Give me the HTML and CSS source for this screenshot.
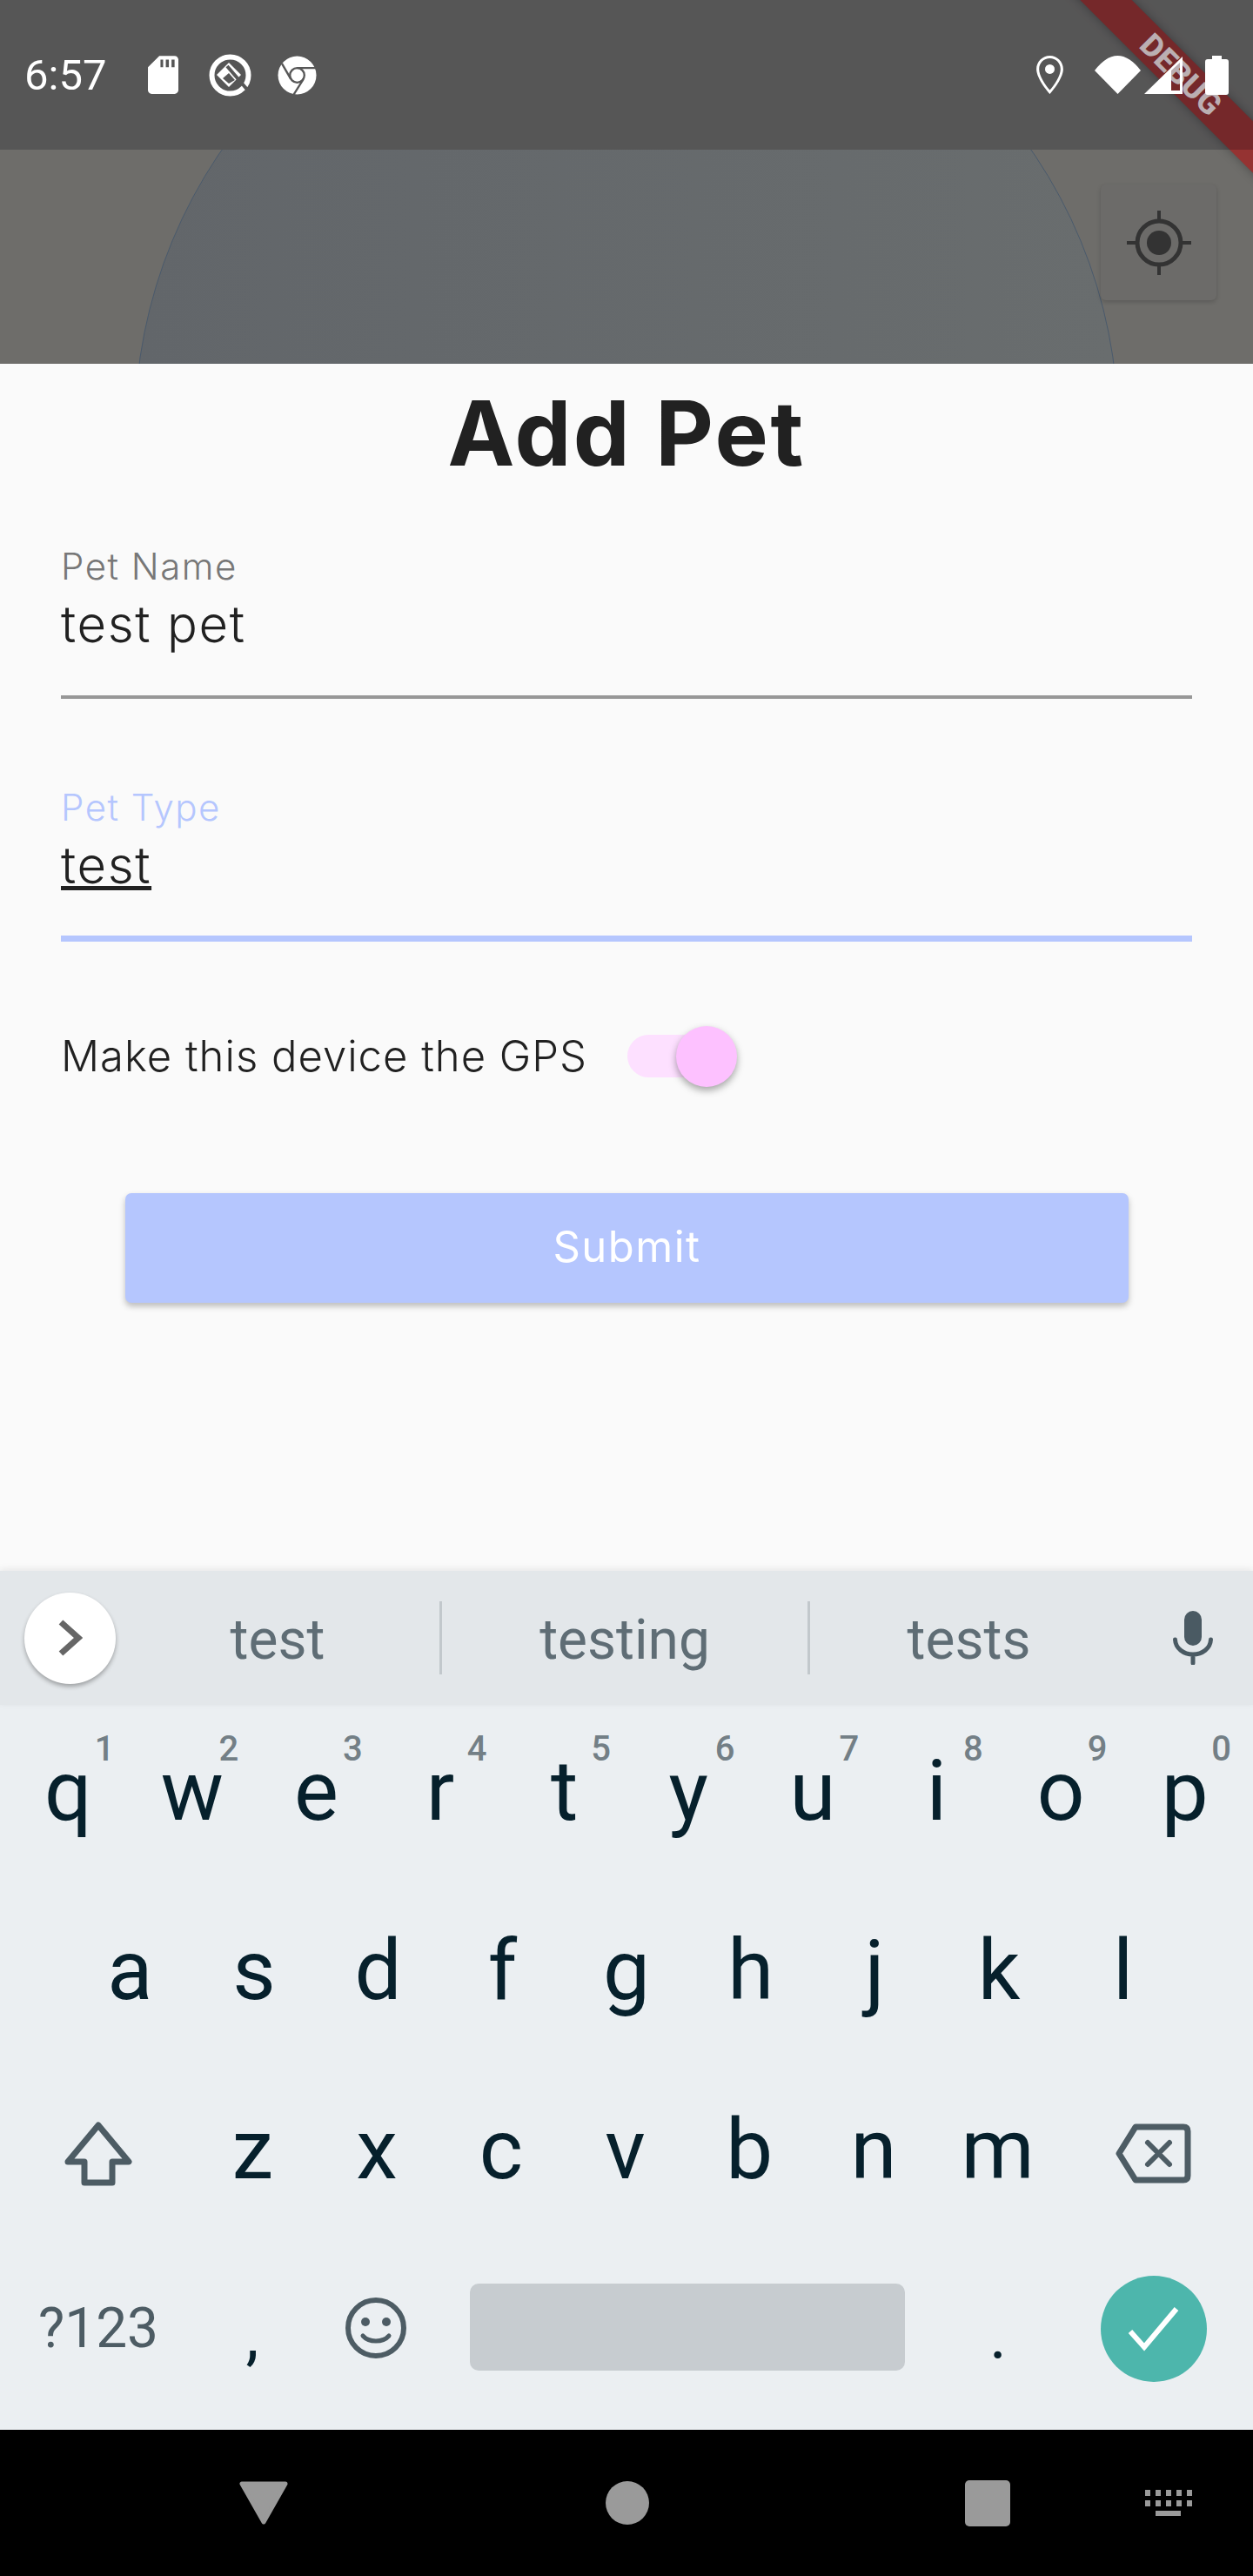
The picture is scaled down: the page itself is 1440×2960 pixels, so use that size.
FILE: index.html
```html
<!DOCTYPE html>
<html>
<head>
    <title>Add Pet</title>
    <link rel="stylesheet" href="styles.css">
</head>
<body>
<div class="phone">
    <div class="top">
        <div class="status-bar">
            <div class="status-left">
                <span class="time">6:57</span>
                <svg class="ic-sd" viewBox="4 2 16 20" width="35" height="44"><path fill="#fff" d="M18 2h-8L4.02 8 4 20c0 1.1.9 2 2 2h12c1.1 0 2-.9 2-2V4c0-1.1-.9-2-2-2zm-6 6h-1.4V4H12v4zm3 0h-1.6V4H15v4zm3 0h-1.6V4H18v4z"/></svg>
                <svg class="ic-q" viewBox="0 0 49 49" width="49" height="49">
                    <circle cx="24.5" cy="24.5" r="21" fill="none" stroke="#fff" stroke-width="6"/>
                    <path fill="#fff" d="M23 10 L37 24 L23 38 L9 24Z"/>
                    <path fill="#575757" d="M23 22 L30 30 L23 34 L16 28Z"/>
                    <path stroke="#575757" stroke-width="4" d="M21 14 L45 42"/>
                </svg>
                <svg class="ic-chrome" viewBox="0 0 46 46" width="45" height="45">
                    <circle cx="23" cy="23" r="22.5" fill="#fff"/>
                    <circle cx="23" cy="23" r="8.5" fill="none" stroke="#575757" stroke-width="2.4"/>
                    <path fill="none" stroke="#575757" stroke-width="2.4" d="M23 14.5 H45 M15.6 27.5 L5 9 M30.4 27.5 L19 45.5"/>
                </svg>
            </div>
            <div class="status-right">
                <svg class="ic-pin" viewBox="5 2 14 20" width="31" height="44"><path fill="#fff" d="M12 2C8.13 2 5 5.13 5 9c0 5.25 7 13 7 13s7-7.75 7-13c0-3.87-3.13-7-7-7zM6.4 9c0-3.1 2.5-5.6 5.6-5.6s5.6 2.5 5.6 5.6c0 3.4-3.3 8.4-5.6 11C9.7 17.4 6.4 12.4 6.4 9z"/><circle cx="12" cy="9" r="2.5" fill="#fff"/></svg>
                <svg class="ic-wifi" viewBox="0 0 53 44" width="53" height="44"><path fill="#fff" d="M0 17 Q26.5 -17 53 17 L26.5 44Z"/></svg>
                <svg class="ic-signal" viewBox="0 0 44 43" width="44" height="43"><path fill="#fff" fill-rule="evenodd" d="M0 43 L44 0 V43Z M31 16 V39 H41 V7Z"/></svg>
                <svg class="ic-battery" viewBox="0 0 27 45" width="27" height="45"><path fill="#fff" d="M8 0 H19 V4 H24 Q27 4 27 7 V42 Q27 45 24 45 H3 Q0 45 0 42 V7 Q0 4 3 4 H8Z"/></svg>
            </div>
        </div>
        <div class="map">
            <svg class="map-art" viewBox="0 172 1440 246" width="1440" height="246">
                <defs>
                    <linearGradient id="water" x1="0" x2="1" y1="0" y2="0">
                        <stop offset="0" stop-color="#62666a"/>
                        <stop offset="1" stop-color="#696d6e"/>
                    </linearGradient>
                </defs>
                <circle cx="720" cy="493" r="565" fill="url(#water)" stroke="#4a5a6c" stroke-width="1"/>
            </svg>
            <div class="locate">
                <svg viewBox="0 0 74 74" width="74" height="74">
                    <circle cx="37" cy="37" r="25" fill="none" stroke="#333" stroke-width="5"/>
                    <circle cx="37" cy="37" r="14" fill="#333"/>
                    <path stroke="#333" stroke-width="4" d="M37 0 V12 M37 62 V74 M0 37 H12 M62 37 H74"/>
                </svg>
            </div>
        </div>
        <div class="ribbon">DEBUG</div>
    </div>

    <div class="sheet">
        <h1 class="title">Add Pet</h1>

        <div class="field">
            <div class="label">Pet Name</div>
            <div class="value">test pet</div>
            <div class="line"></div>
        </div>

        <div class="field field-active">
            <div class="label">Pet Type</div>
            <div class="value"><u>test</u></div>
            <div class="line"></div>
        </div>

        <div class="gps-row">
            <span class="gps-label">Make this device the GPS</span>
            <div class="switch"><div class="thumb"></div></div>
        </div>

        <div class="submit">Submit</div>
    </div>

    <div class="suggest-bar">
        <div class="more">
            <svg viewBox="0 0 28 42" width="28" height="42"><path fill="none" stroke="#666" stroke-width="7" d="M3 3 L23 21 L3 39"/></svg>
        </div>
        <div class="word word-1">test</div>
        <div class="divider"></div>
        <div class="word word-2">testing</div>
        <div class="divider"></div>
        <div class="word word-3">tests</div>
        <svg class="mic" viewBox="0 0 46 62" width="46" height="62">
            <rect x="13" y="0" width="20" height="40" rx="10" fill="#4a5a63"/>
            <path fill="none" stroke="#4a5a63" stroke-width="5" stroke-linecap="round" d="M2.5 33 C3 43 12 50 23 50 C34 50 43 43 43.5 33 M23 50 V60"/>
        </svg>
    </div>

    <div class="keyboard">
        <div class="row row-top">
            <div class="key">q<span class="hint">1</span></div>
            <div class="key">w<span class="hint">2</span></div>
            <div class="key">e<span class="hint">3</span></div>
            <div class="key">r<span class="hint">4</span></div>
            <div class="key">t<span class="hint">5</span></div>
            <div class="key">y<span class="hint">6</span></div>
            <div class="key">u<span class="hint">7</span></div>
            <div class="key">i<span class="hint">8</span></div>
            <div class="key">o<span class="hint">9</span></div>
            <div class="key">p<span class="hint">0</span></div>
        </div>
        <div class="row row-mid">
            <div class="key">a</div>
            <div class="key">s</div>
            <div class="key">d</div>
            <div class="key">f</div>
            <div class="key">g</div>
            <div class="key">h</div>
            <div class="key">j</div>
            <div class="key">k</div>
            <div class="key">l</div>
        </div>
        <div class="row row-low">
            <div class="key key-icon">
                <svg viewBox="0 0 78 75" width="78" height="75"><path fill="none" stroke="#4d5c64" stroke-width="7" stroke-linejoin="round" d="M39 5 L74 47 H55 V71 H23 V47 H4Z"/></svg>
            </div>
            <div class="key">z</div>
            <div class="key">x</div>
            <div class="key">c</div>
            <div class="key">v</div>
            <div class="key">b</div>
            <div class="key">n</div>
            <div class="key">m</div>
            <div class="key key-icon">
                <svg viewBox="0 0 87 69" width="87" height="69">
                    <path fill="none" stroke="#4d5c64" stroke-width="7" stroke-linejoin="round" d="M23 4 H78 Q83 4 83 9 V60 Q83 65 78 65 H23 L4 34.5Z"/>
                    <path fill="none" stroke="#4d5c64" stroke-width="6" stroke-linecap="round" d="M37 22 L62 47 M62 22 L37 47"/>
                </svg>
            </div>
        </div>
        <div class="row row-bottom">
            <div class="key key-symbols">?123</div>
            <div class="key key-punct">,</div>
            <div class="key key-icon">
                <svg class="smiley" viewBox="0 0 70 70" width="70" height="70">
                    <circle cx="35" cy="35" r="32" fill="none" stroke="#4d5c64" stroke-width="6"/>
                    <circle cx="23" cy="28" r="5" fill="#4d5c64"/>
                    <circle cx="47" cy="28" r="5" fill="#4d5c64"/>
                    <path fill="none" stroke="#4d5c64" stroke-width="5" stroke-linecap="round" d="M20 44 C27 52 43 52 50 44"/>
                </svg>
            </div>
            <div class="key key-icon"><div class="space"></div></div>
            <div class="key key-punct">.</div>
            <div class="key key-icon">
                <div class="enter">
                    <svg viewBox="0 0 60 52" width="60" height="52"><path fill="none" stroke="#fff" stroke-width="6" d="M3 29 L19 47 L56 3"/></svg>
                </div>
            </div>
        </div>
    </div>

    <div class="nav-bar">
        <svg class="nav-back" viewBox="0 0 56 50" width="56" height="50"><path fill="#9a9a9a" stroke="#9a9a9a" stroke-width="5" stroke-linejoin="round" d="M3 3 H53 L28 47Z"/></svg>
        <div class="nav-home"></div>
        <div class="nav-recent"></div>
        <svg class="nav-kbd" viewBox="0 0 54 30" width="54" height="30">
            <g fill="#9a9a9a">
                <rect x="0" y="0" width="6" height="7"/><rect x="12" y="0" width="6" height="7"/><rect x="24" y="0" width="6" height="7"/><rect x="36" y="0" width="6" height="7"/><rect x="48" y="0" width="6" height="7"/>
                <rect x="0" y="12" width="6" height="7"/><rect x="12" y="12" width="6" height="7"/><rect x="24" y="12" width="6" height="7"/><rect x="36" y="12" width="6" height="7"/><rect x="48" y="12" width="6" height="7"/>
                <rect x="12" y="24" width="29" height="6"/>
            </g>
        </svg>
    </div>
</div>
</body>
</html>
```

FILE: styles.css
```css
body {
    margin: 0;
    background: #fafafa;
    font-family: Roboto, sans-serif;
}
.phone {
    position: relative;
    width: 1440px;
    height: 2960px;
    overflow: hidden;
    display: flex;
    flex-direction: column;
}

/* status bar + map */
.top {
    position: relative;
    height: 418px;
    background: #6e6d6a;
}
.status-bar {
    position: relative;
    z-index: 2;
    height: 172px;
    box-sizing: border-box;
    padding: 0 28px;
    background: rgba(0, 1, 15, 0.21);
    display: flex;
    justify-content: space-between;
    align-items: center;
    color: #fff;
}
.status-left,
.status-right {
    display: flex;
    align-items: center;
}
.time {
    width: 142px;
    font-size: 49px;
}
.ic-q { margin-left: 35px; }
.ic-chrome { margin-left: 30px; }
.ic-wifi { margin-left: 36px; }
.ic-signal { margin-left: 4px; }
.ic-battery { margin-left: 26px; }
.map {
    height: 246px;
}
.map-art {
    display: block;
}
.locate {
    position: absolute;
    left: 1265px;
    top: 212px;
    width: 133px;
    height: 133px;
    background: #6c6b69;
    border-radius: 6px;
    box-shadow: 0 2px 5px rgba(0, 0, 0, 0.18);
    display: flex;
    align-items: center;
    justify-content: center;
}
.ribbon {
    position: absolute;
    z-index: 1;
    left: 1154px;
    top: 62px;
    width: 400px;
    height: 42px;
    box-sizing: border-box;
    padding-left: 8px;
    transform: rotate(45deg);
    background: rgba(170, 20, 20, 0.65);
    box-shadow: 0 0 12px rgba(0, 0, 0, 0.3);
    color: rgba(255, 255, 255, 0.85);
    font-size: 36px;
    font-weight: 800;
    line-height: 42px;
    text-align: center;
}

/* form sheet */
.sheet {
    height: 1387px;
    box-sizing: border-box;
    padding: 0 70px;
    background: #fafafa;
    font-family: Inter, sans-serif;
    color: #212121;
}
.title {
    margin: 0;
    height: 160px;
    font-size: 103px;
    font-weight: 700;
    letter-spacing: 2.5px;
    line-height: 160px;
    text-align: center;
}
.field {
    margin-top: 43px;
}
.field-active {
    margin-top: 95px;
}
.label {
    height: 60px;
    font-size: 42px;
    font-weight: 300;
    letter-spacing: 1.5px;
    line-height: 60px;
    color: #777;
}
.value {
    margin-top: 1px;
    height: 70px;
    font-size: 58px;
    font-weight: 300;
    letter-spacing: 1.6px;
    line-height: 70px;
}
.line {
    margin-top: 47px;
    height: 4px;
    background: #979797;
}
.field-active .label { color: #b5c6fe; }
.field-active .line {
    margin-top: 46px;
    height: 7px;
    background: #b5c6fe;
}
.gps-row {
    margin-top: 81px;
    height: 100px;
    display: flex;
    align-items: center;
}
.gps-label {
    width: 651px;
    font-size: 49px;
    font-weight: 300;
    letter-spacing: 1px;
}
.switch {
    position: relative;
    width: 119px;
    height: 49px;
    border-radius: 25px;
    background: #fde0ff;
}
.thumb {
    position: absolute;
    left: 56px;
    top: -10px;
    width: 70px;
    height: 70px;
    border-radius: 50%;
    background: #fdc1ff;
    box-shadow: 0 4px 9px rgba(0, 0, 0, 0.35);
}
.submit {
    margin: 108px 0 0 74px;
    width: 1153px;
    height: 126px;
    border-radius: 7px;
    background: #b5c6fe;
    box-shadow: 0 4px 7px rgba(0, 0, 0, 0.25);
    color: #fff;
    font-size: 49px;
    font-weight: 400;
    letter-spacing: 1.5px;
    line-height: 124px;
    text-align: center;
}

/* keyboard suggestions */
.suggest-bar {
    position: relative;
    height: 154px;
    box-sizing: border-box;
    padding-left: 28px;
    background: #e3e7ea;
    box-shadow: 0 -2px 8px rgba(0, 0, 0, 0.08);
    display: flex;
    align-items: center;
}
.more {
    width: 105px;
    height: 105px;
    border-radius: 50%;
    background: #fff;
    box-shadow: 0 3px 5px rgba(0, 0, 0, 0.3);
    display: flex;
    align-items: center;
    justify-content: center;
}
.word {
    padding-top: 4px;
    font-size: 64px;
    color: #5f6d75;
    text-align: center;
}
.word-1 { width: 372px; }
.word-2 { width: 420px; }
.word-3 { width: 365px; }
.divider {
    width: 3px;
    height: 84px;
    background: #c2c8cc;
}
.mic {
    margin-left: 52px;
}

/* keys */
.keyboard {
    height: 833px;
    background: #ebeff2;
    color: #06202c;
}
.row {
    height: 206px;
    display: grid;
    box-sizing: border-box;
    padding: 0 7px;
}
.row-top { grid-template-columns: repeat(10, 1fr); }
.row-mid {
    grid-template-columns: repeat(9, 1fr);
    padding: 0 78px;
}
.row-low { grid-template-columns: 212px repeat(7, 1fr) 215px; }
.row-bottom {
    height: 215px;
    grid-template-columns: 212px 142px 142px 573px 142px 215px;
}
.key {
    position: relative;
    height: 198px;
    font-size: 96px;
    line-height: 198px;
    text-align: center;
}
.key-icon {
    display: flex;
    align-items: center;
    justify-content: center;
}
.row-low .key-icon { height: 206px; }
.key-symbols {
    font-size: 64px;
    color: #4d5c64;
}
.key-punct {
    font-size: 76px;
    line-height: 212px;
}
.hint {
    position: absolute;
    right: 18px;
    top: 31px;
    font-size: 40px;
    font-weight: 500;
    line-height: 40px;
    color: #737f86;
}
.smiley {
    margin-bottom: 3px;
}
.space {
    margin-bottom: 4px;
    width: 500px;
    height: 100px;
    border-radius: 10px;
    background: #c7ccd0;
}
.enter {
    width: 122px;
    height: 122px;
    border-radius: 50%;
    background: #4db6ac;
    display: flex;
    align-items: center;
    justify-content: center;
}

/* nav bar */
.nav-bar {
    height: 168px;
    box-sizing: border-box;
    padding: 0 0 0 275px;
    background: #000;
    display: flex;
    align-items: center;
}
.nav-home {
    margin-left: 365px;
    width: 50px;
    height: 50px;
    border-radius: 50%;
    background: #9a9a9a;
}
.nav-recent {
    margin-left: 363px;
    width: 52px;
    height: 53px;
    border-radius: 5px;
    background: #9a9a9a;
}
.nav-kbd {
    margin-left: 155px;
}
```
